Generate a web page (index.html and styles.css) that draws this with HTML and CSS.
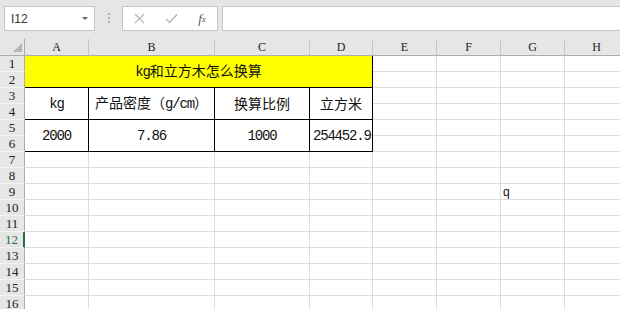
FILE: index.html
```html
<!DOCTYPE html>
<html>
<head>
    <meta charset="UTF-8">
    <title>kg和立方木怎么换算</title>
    <link rel="stylesheet" href="styles.css">
</head>
<body>
    <div class="formula-bar">
        <div class="name-box">
            <span>I12</span>
            <span class="arrow"></span>
        </div>
        <div class="dots"><i></i><i></i><i></i></div>
        <div class="fx-tools">
            <span class="tool x-icon">
                <svg width="11" height="11" viewBox="0 0 11 11"><path d="M1 1 L10 10 M10 1 L1 10" stroke="#b8b8b8" stroke-width="1.3" fill="none"/></svg>
            </span>
            <span class="tool ok-icon">
                <svg width="13" height="11" viewBox="0 0 13 11"><path d="M1 6 L4.5 9.5 L12 1.5" stroke="#b8b8b8" stroke-width="1.5" fill="none"/></svg>
            </span>
            <span class="tool fx">f<sub>x</sub></span>
        </div>
        <div class="fx-input"></div>
    </div>

    <table class="sheet">
        <colgroup>
            <col class="w-rh"><col class="w-a"><col class="w-b"><col class="w-c"><col class="w-d">
            <col class="w-e"><col class="w-e"><col class="w-e"><col class="w-e">
        </colgroup>
        <thead>
            <tr>
                <th class="corner"><span class="tri"></span></th>
                <th>A</th><th>B</th><th>C</th><th>D</th><th>E</th><th>F</th><th>G</th><th>H</th>
            </tr>
        </thead>
        <tbody>
            <tr>
                <th class="rh">1</th>
                <td class="title" colspan="4" rowspan="2"><span class="n">kg</span>和立方木怎么换算</td>
                <td></td><td></td><td></td><td></td>
            </tr>
            <tr><th class="rh">2</th><td></td><td></td><td></td><td></td></tr>
            <tr>
                <th class="rh">3</th>
                <td class="box" rowspan="2"><span class="n">kg</span></td>
                <td class="box" rowspan="2">产品密度（<span class="n">g/cm</span>）</td>
                <td class="box" rowspan="2">换算比例</td>
                <td class="box" rowspan="2">立方米</td>
                <td></td><td></td><td></td><td></td>
            </tr>
            <tr><th class="rh">4</th><td></td><td></td><td></td><td></td></tr>
            <tr>
                <th class="rh">5</th>
                <td class="box" rowspan="2"><span class="n">2000</span></td>
                <td class="box" rowspan="2"><span class="n">7.86</span></td>
                <td class="box" rowspan="2"><span class="n">1000</span></td>
                <td class="box" rowspan="2"><span class="n">254452.9</span></td>
                <td></td><td></td><td></td><td></td>
            </tr>
            <tr><th class="rh">6</th><td></td><td></td><td></td><td></td></tr>
            <tr><th class="rh">7</th><td></td><td></td><td></td><td></td><td></td><td></td><td></td><td></td></tr>
            <tr><th class="rh">8</th><td></td><td></td><td></td><td></td><td></td><td></td><td></td><td></td></tr>
            <tr><th class="rh">9</th><td></td><td></td><td></td><td></td><td></td><td></td><td class="plain">q</td><td></td></tr>
            <tr><th class="rh">10</th><td></td><td></td><td></td><td></td><td></td><td></td><td></td><td></td></tr>
            <tr><th class="rh">11</th><td></td><td></td><td></td><td></td><td></td><td></td><td></td><td></td></tr>
            <tr><th class="rh active">12</th><td></td><td></td><td></td><td></td><td></td><td></td><td></td><td></td></tr>
            <tr><th class="rh">13</th><td></td><td></td><td></td><td></td><td></td><td></td><td></td><td></td></tr>
            <tr><th class="rh">14</th><td></td><td></td><td></td><td></td><td></td><td></td><td></td><td></td></tr>
            <tr><th class="rh">15</th><td></td><td></td><td></td><td></td><td></td><td></td><td></td><td></td></tr>
            <tr><th class="rh">16</th><td></td><td></td><td></td><td></td><td></td><td></td><td></td><td></td></tr>
        </tbody>
    </table>
</body>
</html>
```

FILE: styles.css
```css
body {
    margin: 0;
    background-color: #ffffff;
    overflow: hidden;
    font-family: "Liberation Sans", sans-serif;
}

.formula-bar {
    display: flex;
    align-items: flex-start;
    height: 39px;
    box-sizing: border-box;
    padding: 6px 0 0 4px;
    background-color: #e6e6e6;
}

.name-box {
    position: relative;
    width: 91px;
    height: 25px;
    box-sizing: border-box;
    display: flex;
    align-items: center;
    padding-left: 6px;
    background-color: #ffffff;
    border: 1px solid #c6c6c6;
    font-size: 12px;
    color: #333333;
}

.name-box .arrow {
    position: absolute;
    right: 6px;
    top: 10px;
    border-left: 3px solid transparent;
    border-right: 3px solid transparent;
    border-top: 3px solid #6a6a6a;
}

.dots {
    width: 27px;
    display: flex;
    flex-direction: column;
    align-items: center;
    gap: 2px;
    padding-top: 7px;
}

.dots i {
    width: 2px;
    height: 2px;
    background-color: #b0b0b0;
}

.fx-tools {
    width: 96px;
    height: 25px;
    box-sizing: border-box;
    display: flex;
    align-items: center;
    background-color: #ffffff;
    border: 1px solid #c6c6c6;
}

.tool {
    display: flex;
    align-items: center;
    justify-content: center;
}

.x-icon {
    width: 32px;
}

.ok-icon {
    width: 32px;
}

.fx {
    width: 30px;
    font-family: "Liberation Serif", serif;
    font-style: italic;
    font-size: 13px;
    color: #555555;
}

.fx sub {
    font-size: 9px;
    vertical-align: -1px;
}

.fx-input {
    flex: 1;
    height: 25px;
    margin-left: 4px;
    box-sizing: border-box;
    background-color: #ffffff;
    border: 1px solid #c6c6c6;
    border-right: none;
}

.sheet {
    table-layout: fixed;
    border-collapse: separate;
    border-spacing: 0;
    width: 629px;
}

.w-rh { width: 25px; }
.w-a { width: 64px; }
.w-b { width: 126px; }
.w-c { width: 95px; }
.w-d { width: 63px; }
.w-e { width: 64px; }

thead tr {
    height: 17px;
}

thead th {
    padding: 0;
    background-color: #e6e6e6;
    border-right: 1px solid #c6c6c6;
    border-bottom: 1px solid #ababab;
    font-family: "Liberation Serif", serif;
    font-size: 12px;
    font-weight: normal;
    line-height: 16px;
    color: #222222;
    vertical-align: bottom;
}

thead th.corner {
    position: relative;
    border-right: 1px solid #ababab;
}

.corner .tri {
    position: absolute;
    right: 2px;
    bottom: 3px;
    border-left: 9px solid transparent;
    border-bottom: 9px solid #b4b4b4;
}

tbody tr {
    height: 16px;
}

th.rh {
    padding: 0;
    background-color: #e6e6e6;
    border-right: 1px solid #ababab;
    border-bottom: 1px solid #f4f4f4;
    font-family: "Liberation Serif", serif;
    font-size: 13px;
    font-weight: normal;
    line-height: 15px;
    color: #222222;
    text-align: center;
}

th.rh.active {
    color: #217346;
    border-right: 2px solid #217346;
}

td {
    padding: 0 3px;
    border-right: 1px solid #dcdcdc;
    border-bottom: 1px solid #dcdcdc;
    font-family: "Noto Sans CJK SC", sans-serif;
    font-size: 14px;
    line-height: 15px;
    color: #111111;
    white-space: nowrap;
}

td.title {
    background-color: #ffff00;
    border-right: 1px solid #000000;
    border-bottom: 1px solid #000000;
    text-align: center;
}

td.box {
    text-align: center;
    border-right: 1px solid #000000;
    border-bottom: 1px solid #000000;
}

td.plain {
    vertical-align: bottom;
    padding-left: 2px;
    font-family: "Liberation Sans", sans-serif;
    font-size: 12px;
    line-height: 14px;
}

.n {
    font-family: "Liberation Mono", monospace;
    font-size: 14px;
    letter-spacing: -1.2px;
}
```
